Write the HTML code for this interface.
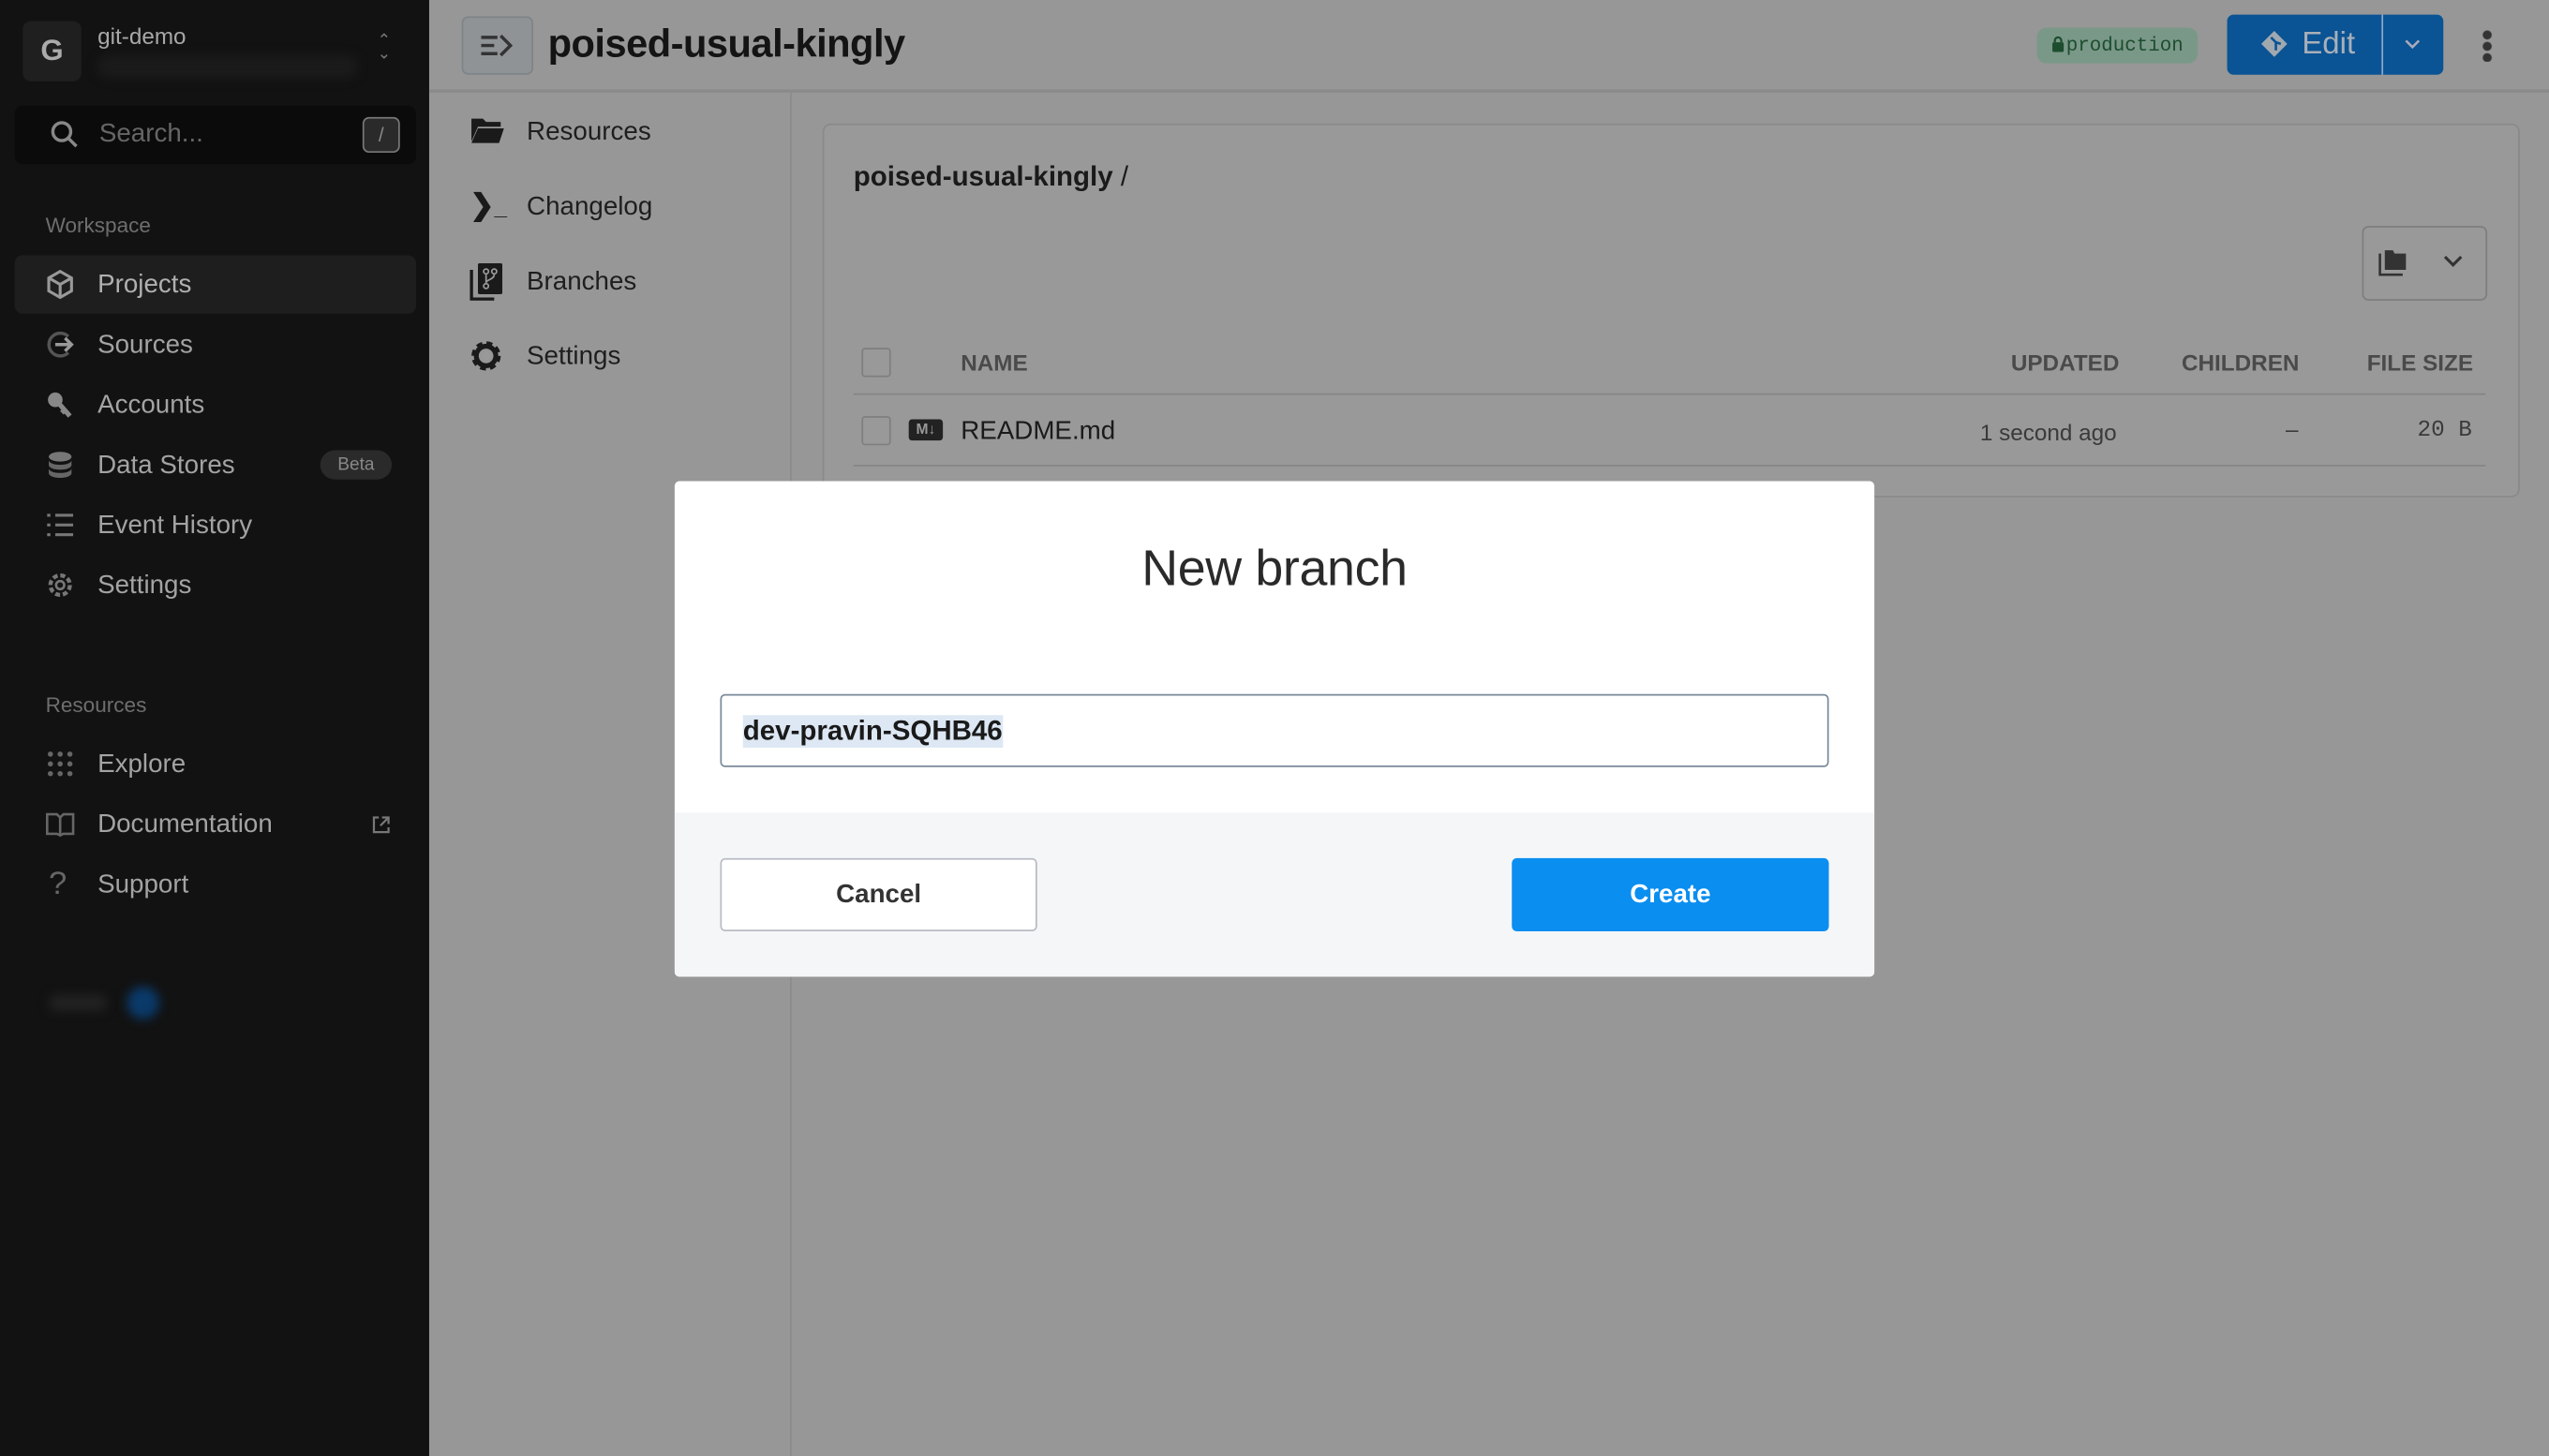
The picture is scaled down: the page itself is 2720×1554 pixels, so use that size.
<!DOCTYPE html>
<html><head><meta charset="utf-8"><style>
html,body{margin:0;padding:0;width:2720px;height:1554px;overflow:hidden;background:#979797}
#w{position:absolute;left:0;top:0;width:1568px;height:896px;transform:scale(1.734694);transform-origin:0 0;font-family:"Liberation Sans",sans-serif;}
.a{position:absolute}
.sb{left:0;top:0;width:264px;height:896px;background:#121212;color:#9a9a9a}
.nav{position:absolute;left:60px;font-size:16px;color:#a3a3a3}
.ic{position:absolute;left:28px;width:18px;height:18px}
.sec{position:absolute;left:28px;font-size:13px;color:#6e6e6e}
.mn{color:#1e1e1e;font-size:16px;position:absolute;left:324px}
</style></head><body><div id="w">
<div class="a sb">
 <div class="a" style="left:14px;top:13px;width:36px;height:37px;background:#1f1f1f;border-radius:5px;color:#aaa;font-weight:bold;font-size:18px;text-align:center;line-height:37px">G</div>
 <div class="a" style="left:60px;top:14px;font-size:14px;color:#a8a8a8">git-demo</div>
 <div class="a" style="left:60px;top:34px;width:160px;height:14px;background:#1b1b1b;border-radius:7px;filter:blur(3px)"></div>
 <div class="a" style="left:232px;top:22px;font-size:10px;color:#777;line-height:8px">⌃<br>⌄</div>
 <div class="a" style="left:9px;top:65px;width:247px;height:36px;background:#0b0b0b;border-radius:5px"></div>
 <svg class="a" style="left:30px;top:73px" width="20" height="20" viewBox="0 0 20 20"><circle cx="8" cy="8" r="5.5" fill="none" stroke="#888" stroke-width="2"/><path d="M12 12l5 5" stroke="#888" stroke-width="2"/></svg>
 <div class="a" style="left:61px;top:74px;font-size:16px;color:#666">Search...</div>
 <div class="a" style="left:223px;top:72px;width:21px;height:20px;border:1.5px solid #777;border-radius:4px;background:#2a2a2a;color:#888;font-size:12px;text-align:center;line-height:20px">/</div>
 <div class="sec" style="top:131px">Workspace</div>
 <div class="a" style="left:9px;top:157px;width:247px;height:36px;background:#1e1e1e;border-radius:5px"></div>
 <svg class="ic" style="top:166px" viewBox="0 0 18 18"><path d="M9 1l7 4v8l-7 4-7-4V5z M2 5l7 4 7-4 M9 9v8" fill="none" stroke="#999" stroke-width="1.8"/></svg>
 <div class="nav" style="top:167px;color:#b0b0b0">Projects</div>
 <svg class="ic" style="top:203px" viewBox="0 0 18 18"><path d="M14 4A7 7 0 1 0 14 14" fill="none" stroke="#555" stroke-width="2"/><path d="M6 9h10M12 5l4 4-4 4" fill="none" stroke="#999" stroke-width="2"/></svg>
 <div class="nav" style="top:204px">Sources</div>
 <svg class="ic" style="top:240px" viewBox="0 0 18 18"><circle cx="6" cy="6" r="4.5" fill="#888"/><path d="M8 8l7 8M12 12l-2 2" stroke="#888" stroke-width="3"/></svg>
 <div class="nav" style="top:241px">Accounts</div>
 <svg class="ic" style="top:277px" viewBox="0 0 18 18"><ellipse cx="9" cy="4" rx="7" ry="3" fill="#777"/><path d="M2 6c0 4 14 4 14 0v3c0 4-14 4-14 0zM2 11c0 4 14 4 14 0v3c0 4-14 4-14 0z" fill="#666"/></svg>
 <div class="nav" style="top:278px">Data Stores</div>
 <div class="a" style="left:197px;top:277px;width:44px;height:18px;background:#2a2a2a;border-radius:9px;font-size:11px;color:#888;text-align:center;line-height:18px">Beta</div>
 <svg class="ic" style="top:314px" viewBox="0 0 18 18"><path d="M1 3h2M6 3h11M1 9h2M6 9h11M1 15h2M6 15h11" stroke="#777" stroke-width="1.8"/></svg>
 <div class="nav" style="top:315px">Event History</div>
 <svg class="ic" style="top:351px" viewBox="0 0 18 18"><circle cx="9" cy="9" r="6" fill="none" stroke="#777" stroke-width="2.5" stroke-dasharray="3 1.7"/><circle cx="9" cy="9" r="2.5" fill="none" stroke="#777" stroke-width="1.5"/></svg>
 <div class="nav" style="top:352px">Settings</div>
 <div class="sec" style="top:426px">Resources</div>
 <svg class="ic" style="top:461px" viewBox="0 0 18 18"><g fill="#666"><circle cx="3" cy="3" r="1.6"/><circle cx="9" cy="3" r="1.6"/><circle cx="15" cy="3" r="1.6"/><circle cx="3" cy="9" r="1.6"/><circle cx="9" cy="9" r="1.6"/><circle cx="15" cy="9" r="1.6"/><circle cx="3" cy="15" r="1.6"/><circle cx="9" cy="15" r="1.6"/><circle cx="15" cy="15" r="1.6"/></g></svg>
 <div class="nav" style="top:462px">Explore</div>
 <svg class="ic" style="top:498px" viewBox="0 0 18 18"><path d="M1 3h6l2 2 2-2h6v12h-6l-2 1-2-1H1zM9 5v11" fill="none" stroke="#666" stroke-width="1.5"/></svg>
 <div class="nav" style="top:499px">Documentation</div>
 <svg class="a" style="left:229px;top:502px" width="11" height="11" viewBox="0 0 11 11"><path d="M4 1H1v9h9V7M6 1h4v4M10 1L5 6" fill="none" stroke="#777" stroke-width="1.3"/></svg>
 <div class="a" style="left:30px;top:533px;font-size:20px;color:#666">?</div>
 <div class="nav" style="top:536px">Support</div>
 <div class="a" style="left:30px;top:612px;width:36px;height:10px;background:#222;border-radius:5px;filter:blur(3px)"></div>
 <div class="a" style="left:78px;top:607px;width:20px;height:20px;background:#0a3a6a;border-radius:50%;filter:blur(3px)"></div>
</div>
<div class="a" style="left:264px;top:55px;width:1304px;height:2px;background:#8a8a8a"></div>
<div class="a" style="left:284px;top:10px;width:42px;height:34px;border:1.5px solid #7f8488;border-radius:4px;background:#8f9396"></div>
<svg class="a" style="left:295px;top:20px" width="22" height="16" viewBox="0 0 22 16"><path d="M1 3h10M1 8h8M1 13h10M13 2l6 6-6 6" fill="none" stroke="#333" stroke-width="2"/></svg>
<div class="a" style="left:337px;top:14px;font-size:24px;font-weight:bold;color:#141414;letter-spacing:-0.3px">poised-usual-kingly</div>
<div class="a" style="left:1253px;top:17px;width:99px;height:22px;background:#7a9887;border-radius:6px;font-family:'Liberation Mono',monospace;font-size:12px;color:#1d4d2f;line-height:22px;text-align:center"><svg width="8" height="10" viewBox="0 0 8 10" style="vertical-align:-1px;margin-right:1px"><path d="M2 4V3a2 2 0 0 1 4 0v1" fill="none" stroke="#1d4d2f" stroke-width="1.3"/><rect x="0.5" y="4" width="7" height="6" rx="1" fill="#1d4d2f"/></svg>production</div>
<div class="a" style="left:1370px;top:9px;width:133px;height:37px;background:#0a5394;border-radius:4px"></div>
<div class="a" style="left:1465px;top:9px;width:1px;height:37px;background:#8aa8c8"></div>
<svg class="a" style="left:1390px;top:18px" width="18" height="18" viewBox="0 0 18 18"><path d="M9 1l8 8-8 8-8-8z" fill="#a0a8b0"/><path d="M7 5l3 3v5M10 8l3 1" stroke="#0a5394" stroke-width="1.5" fill="none"/></svg>
<div class="a" style="left:1416px;top:17px;font-size:19px;color:#a8b0b8">Edit</div>
<svg class="a" style="left:1478px;top:23px" width="12" height="8" viewBox="0 0 12 8"><path d="M2 2l4 4 4-4" stroke="#aab" stroke-width="1.5" fill="none"/></svg>
<div class="a" style="left:1527px;top:18px;width:6px;height:20px;background:radial-gradient(circle,#333 2.5px,transparent 3px) 0 0/6px 7px"></div>
<div class="a" style="left:486px;top:57px;width:1px;height:839px;background:#8c8c8c"></div>
<svg class="a" style="left:289px;top:71px" width="22" height="18" viewBox="0 0 22 18"><path d="M1 2h7l2 2h9v3H5L1 16z M5 8h16l-3 9H1z" fill="#1a1a1a"/></svg>
<div class="mn" style="top:73px">Resources</div>
<div class="a" style="left:289px;top:116px;font-size:18px;font-weight:bold;color:#1a1a1a">❯<span style="font-size:14px">_</span></div>
<div class="mn" style="top:119px">Changelog</div>
<svg class="a" style="left:289px;top:161px" width="22" height="24" viewBox="0 0 22 24"><path d="M1 5v18h14" fill="none" stroke="#1a1a1a" stroke-width="2"/><rect x="5" y="1" width="15" height="19" rx="1" fill="#1a1a1a"/><circle cx="10" cy="6" r="1.5" fill="none" stroke="#999"/><circle cx="10" cy="15" r="1.5" fill="none" stroke="#999"/><circle cx="15" cy="6" r="1.5" fill="none" stroke="#999"/><path d="M10 8v5M15 8c0 3-5 3-5 5" stroke="#999" fill="none"/></svg>
<div class="mn" style="top:165px">Branches</div>
<svg class="a" style="left:289px;top:209px" width="20" height="20" viewBox="0 0 20 20"><circle cx="10" cy="10" r="7" fill="none" stroke="#1a1a1a" stroke-width="4" stroke-dasharray="3.2 2.3"/><circle cx="10" cy="10" r="6" fill="none" stroke="#1a1a1a" stroke-width="3"/><circle cx="10" cy="10" r="2.5" fill="#999"/></svg>
<div class="mn" style="top:211px">Settings</div>
<div class="a" style="left:506px;top:76px;width:1042px;height:228px;border:1.5px solid #8a8a8a;border-radius:5px;background:#999"></div>
<div class="a" style="left:525px;top:99px;font-size:17px;font-weight:bold;color:#1a1a1a">poised-usual-kingly <span style="font-weight:normal">/</span></div>
<div class="a" style="left:1453px;top:139px;width:75px;height:44px;border:1.5px solid #7e7e7e;border-radius:4px"></div>
<svg class="a" style="left:1463px;top:152px" width="20" height="18" viewBox="0 0 20 18"><path d="M1 4v13h14" fill="none" stroke="#333" stroke-width="1.5"/><path d="M4 2h5l1 2h7v10H4z" fill="#333"/></svg>
<svg class="a" style="left:1503px;top:157px" width="12" height="8" viewBox="0 0 12 8"><path d="M1 1l5 5 5-5" stroke="#333" stroke-width="1.8" fill="none"/></svg>
<div class="a" style="left:530px;top:214px;width:16px;height:16px;border:1.5px solid #7f7f7f;border-radius:2px"></div>
<div class="a" style="left:591px;top:215px;font-size:14px;font-weight:bold;color:#4a4a4a">NAME</div>
<div class="a" style="left:1237px;top:215px;font-size:14px;font-weight:bold;color:#4a4a4a">UPDATED</div>
<div class="a" style="left:1342px;top:215px;font-size:14px;font-weight:bold;color:#4a4a4a">CHILDREN</div>
<div class="a" style="left:1456px;top:215px;font-size:14px;font-weight:bold;color:#4a4a4a">FILE SIZE</div>
<div class="a" style="left:525px;top:242px;width:1004px;height:1px;background:#868686"></div>
<div class="a" style="left:530px;top:256px;width:16px;height:16px;border:1.5px solid #7f7f7f;border-radius:2px"></div>
<div class="a" style="left:559px;top:258px;width:21px;height:13px;background:#222;border-radius:2px;color:#999;font-size:9px;font-weight:bold;text-align:center;line-height:13px">M↓</div>
<div class="a" style="left:591px;top:257px;font-size:16px;color:#1a1a1a">README.md</div>
<div class="a" style="left:1218px;top:258px;font-size:14px;color:#3a3a3a">1 second ago</div>
<div class="a" style="left:1406px;top:256px;font-size:14px;color:#3a3a3a">–</div>
<div class="a" style="left:1487px;top:257px;font-size:14px;color:#3a3a3a;font-family:'Liberation Mono',monospace">20 B</div>
<div class="a" style="left:525px;top:286px;width:1004px;height:1px;background:#868686"></div>
<div class="a" style="left:415px;top:296px;width:738px;height:305px;background:#fff;border-radius:3px;overflow:hidden">
 <div class="a" style="left:0;top:36px;width:738px;text-align:center;font-size:31px;color:#2a2a2a;font-weight:normal;letter-spacing:-0.2px">New branch</div>
 <div class="a" style="left:28px;top:131px;width:680px;height:43px;border:1px solid #7a8a99;border-radius:3px"></div>
 <div class="a" style="left:42px;top:144px;font-size:17px;font-weight:bold;color:#1a1a1a;background:#dde8f4">dev-pravin-SQHB46</div>
 <div class="a" style="left:0;top:204px;width:738px;height:101px;background:#f5f6f8"></div>
 <div class="a" style="left:28px;top:232px;width:193px;height:43px;border:1px solid #b8bcc2;border-radius:3px;background:#fff;text-align:center;line-height:43px;font-weight:bold;font-size:16px;color:#333">Cancel</div>
 <div class="a" style="left:515px;top:232px;width:195px;height:45px;background:#0a8ef0;border-radius:3px;text-align:center;line-height:45px;font-weight:bold;font-size:16px;color:#fff">Create</div>
</div>
</div></body></html>
